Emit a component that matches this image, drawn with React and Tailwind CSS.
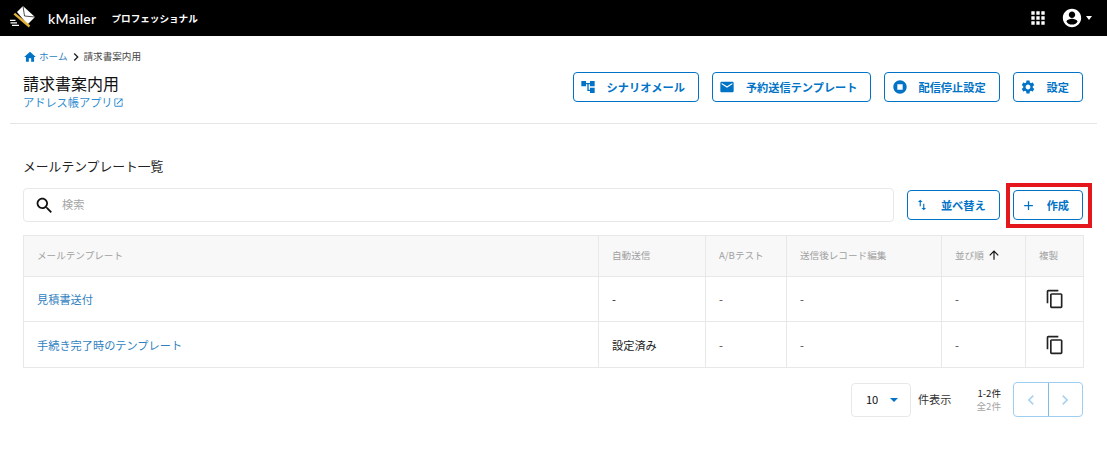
const F = "[font-family:'Noto_Sans_CJK_JP','Noto_Sans',sans-serif]";

const Ic = ({ d, size = 16, className = "" }) => (
  <svg width={size} height={size} viewBox="0 0 24 24" fill="currentColor" className={"shrink-0 " + className}>
    <path d={d} />
  </svg>
);

const P = {
  home: "M10 20v-6h4v6h5v-8h3L12 3 2 12h3v8z",
  chevron: "M8.59 16.59 13.17 12 8.59 7.41 10 6l6 6-6 6z",
  tree: "M22 11V3h-7v3H9V3H2v8h7V8h2v10h4v3h7v-8h-7v3h-2V8h2v3z",
  mail: "M20 4H4c-1.1 0-2 .9-2 2v12c0 1.1.9 2 2 2h16c1.1 0 2-.9 2-2V6c0-1.1-.9-2-2-2zm0 4-8 5-8-5V6l8 5 8-5v2z",
  stop: "M12 2C6.48 2 2 6.48 2 12s4.48 10 10 10 10-4.48 10-10S17.52 2 12 2zm4 14H8V8h8v8z",
  gear: "M19.14 12.94c.04-.3.06-.61.06-.94 0-.32-.02-.64-.07-.94l2.03-1.58c.18-.14.23-.41.12-.61l-1.92-3.32c-.12-.22-.37-.29-.59-.22l-2.39.96c-.5-.38-1.03-.7-1.62-.94l-.36-2.54c-.04-.24-.24-.41-.48-.41h-3.84c-.24 0-.43.17-.47.41l-.36 2.54c-.59.24-1.13.57-1.62.94l-2.39-.96c-.22-.08-.47 0-.59.22L2.74 8.87c-.12.21-.08.47.12.61l2.03 1.58c-.05.3-.09.63-.09.94s.02.64.07.94l-2.03 1.58c-.18.14-.23.41-.12.61l1.92 3.32c.12.22.37.29.59.22l2.39-.96c.5.38 1.03.7 1.62.94l.36 2.54c.05.24.24.41.48.41h3.84c.24 0 .44-.17.47-.41l.36-2.54c.59-.24 1.13-.56 1.62-.94l2.39.96c.22.08.47 0 .59-.22l1.92-3.32c.12-.22.07-.47-.12-.61l-2.01-1.58zM12 15.6c-1.98 0-3.6-1.62-3.6-3.6s1.62-3.6 3.6-3.6 3.6 1.62 3.6 3.6-1.62 3.6-3.6 3.6z",
  search: "M15.5 14h-.79l-.28-.27C15.41 12.59 16 11.11 16 9.5 16 5.91 13.09 3 9.5 3S3 5.91 3 9.5 5.91 16 9.5 16c1.61 0 3.09-.59 4.23-1.57l.27.28v.79l5 4.99L20.49 19l-4.99-5zm-6 0C7.01 14 5 11.99 5 9.5S7.01 5 9.5 5 14 7.01 14 9.5 11.99 14 9.5 14z",
  sort: "M16 17.01V10h-2v7.01h-3L15 21l4-3.99h-3zM9 3 5 6.99h3V14h2V6.99h3L9 3z",
  plus: "M19 13h-6v6h-2v-6H5v-2h6V5h2v6h6v2z",
  up: "M4 12l1.41 1.41L11 7.83V20h2V7.83l5.58 5.59L20 12l-8-8-8 8z",
  copy: "M16 1H4c-1.1 0-2 .9-2 2v14h2V3h12V1zm3 4H8c-1.1 0-2 .9-2 2v14c0 1.1.9 2 2 2h11c1.1 0 2-.9 2-2V7c0-1.1-.9-2-2-2zm0 16H8V7h11v14z",
  grid: "M4 8h4V4H4v4zm6 12h4v-4h-4v4zm-6 0h4v-4H4v4zm0-6h4v-4H4v4zm6 0h4v-4h-4v4zm6-10v4h4V4h-4zm-6 4h4V4h-4v4zm6 6h4v-4h-4v4zm0 6h4v-4h-4v4z",
  account: "M12 2C6.48 2 2 6.48 2 12s4.48 10 10 10 10-4.48 10-10S17.52 2 12 2zm0 3c1.93 0 3.5 1.57 3.5 3.5S13.93 12 12 12s-3.5-1.57-3.5-3.5S10.07 5 12 5zm0 14.2c-2.5 0-4.71-1.28-6-3.22.03-1.99 4-3.08 6-3.08s5.97 1.09 6 3.08c-1.29 1.94-3.5 3.22-6 3.22z",
  open: "M19 19H5V5h7V3H5c-1.11 0-2 .9-2 2v14c0 1.1.89 2 2 2h14c1.1 0 2-.9 2-2v-7h-2v7zM14 3v2h3.59l-9.83 9.83 1.41 1.41L19 6.41V10h2V3h-7z",
  left: "M15.41 7.41 14 6l-6 6 6 6 1.41-1.41L10.83 12z",
  right: "M10 6 8.59 7.41 13.17 12l-4.58 4.59L10 18l6-6z",
};

const Btn = ({ icon, children, iconSize = 16 }) => (
  <button className="h-[30px] flex items-center rounded-[4px] border border-[#0073c6] bg-white text-[#0073c6] text-[11.2px] font-bold pr-[13px]">
    <span className="w-[33px] pl-[6px] flex items-center justify-center pr-[10px] shrink-0">
      <Ic d={icon} size={iconSize} />
    </span>
    <span>{children}</span>
  </button>
);

const rows = [
  ["見積書送付", "-"],
  ["手続き完了時のテンプレート", "設定済み"],
];

export default function App() {
  return (
    <div className={`${F} w-[1107px] h-[473px] bg-white text-[#222] overflow-hidden`}>
      <header className="h-9 bg-black flex items-center pl-[9px] pr-[15px] text-white">
        <svg width="27" height="24" viewBox="0 0 27 24" className="shrink-0">
          <path d="M14 0 26 11 18.5 18.5 8 6z" fill="#fff" />
          <path d="M5.3 7.7 L20.5 20.5" stroke="#e2b23a" strokeWidth="2.4" />
          <path d="M14 0 L15.5 10 L26 11" stroke="#000" strokeWidth="0.7" fill="none" />
          <path d="M1 14.3h5.5M1.5 16.8h6.5M3 19.3h7" stroke="#fff" strokeWidth="1.2" />
        </svg>
        <span className="ml-[12px] text-[14px] font-medium tracking-[0.3px] [font-family:'Lato',sans-serif]">kMailer</span>
        <span className="ml-[15px] text-[9.6px] font-bold">プロフェッショナル</span>
        <div className="ml-auto flex items-center">
          <Ic d={P.grid} size={20} />
          <Ic d={P.account} size={22} className="ml-[13px]" />
          <span className="ml-[3px] w-0 h-0 border-x-[3.5px] border-x-transparent border-t-[4px] border-t-white" />
        </div>
      </header>

      <div className="ml-[10px] mr-[10px] pl-[13px] pr-[14px] border-b border-[#e5e5e5] h-[88px]">
        <nav className="pt-[13px] flex items-center text-[9.6px] leading-[15px] h-[28px]">
          <Ic d={P.home} size={14} className="text-[#0073c6]" />
          <span className="ml-[2px] text-[#2f7fc1]">ホーム</span>
          <Ic d={P.chevron} size={16} className="text-[#222]" />
          <span className="text-[#444]">請求書案内用</span>
        </nav>
        <div className="flex justify-between mt-[7px]">
          <div>
            <h1 className="text-[16px] leading-[24px] font-normal text-[#111]">請求書案内用</h1>
            <a className="flex items-center text-[11.2px] leading-[14px] text-[#2f8bd0]">
              アドレス帳アプリ<Ic d={P.open} size={11} />
            </a>
          </div>
          <div className="flex gap-[13px] mt-[1px]">
            <Btn icon={P.tree}>シナリオメール</Btn>
            <Btn icon={P.mail}>予約送信テンプレート</Btn>
            <Btn icon={P.stop}>配信停止設定</Btn>
            <Btn icon={P.gear}>設定</Btn>
          </div>
        </div>
      </div>

      <main className="pl-[23px] pr-[24px]">
        <h2 className="mt-[33px] text-[12.8px] leading-[18px] font-normal text-[#222]">メールテンプレート一覧</h2>

        <div className="mt-[13px] flex items-center">
          <div className="w-[871px] h-[34px] flex items-center border border-[#e8e8e8] rounded-[4px] pl-[10px]">
            <Ic d={P.search} size={21} className="text-[#111]" />
            <span className="ml-[7px] pb-[1px] text-[11.2px] text-[#a5a5a5]">検索</span>
          </div>
          <div className="ml-[13px]">
            <Btn icon={P.sort} iconSize={14}>並べ替え</Btn>
          </div>
          <div className="relative ml-[13px]">
            <Btn icon={P.plus} iconSize={15}>作成</Btn>
            <div className="absolute -left-[7px] -right-[9px] -top-[7px] -bottom-[8px] border-[4px] border-[#e3171c] pointer-events-none" />
          </div>
        </div>

        <table className="mt-[13px] w-[1060px] table-fixed border-collapse text-[9.6px]">
          <colgroup>
            <col className="w-[575px]" />
            <col className="w-[107px]" />
            <col className="w-[81px]" />
            <col className="w-[155px]" />
            <col className="w-[84px]" />
            <col className="w-[58px]" />
          </colgroup>
          <thead>
            <tr className="h-[41px] bg-[#f8f8f8] text-[#a0a0a0]">
              <th className="border border-[#e8e8e8] pl-[13px] pb-[1px] text-left font-normal">メールテンプレート</th>
              <th className="border border-[#e8e8e8] pl-[13px] pb-[1px] text-left font-normal">自動送信</th>
              <th className="border border-[#e8e8e8] pl-[13px] pb-[1px] text-left font-normal">A/Bテスト</th>
              <th className="border border-[#e8e8e8] pl-[13px] pb-[1px] text-left font-normal">送信後レコード編集</th>
              <th className="border border-[#e8e8e8] pl-[13px] pb-[1px] text-left font-normal">
                <span className="flex items-center gap-[3px]">並び順<Ic d={P.up} size={14} className="text-[#111]" /></span>
              </th>
              <th className="border border-[#e8e8e8] pl-[13px] pb-[1px] text-left font-normal">複製</th>
            </tr>
          </thead>
          <tbody>
            {rows.map(([name, auto], i) => (
              <tr key={i} className={i === 0 ? "h-[45px]" : "h-[46px] [&>td:not(:last-child)]:pt-[2px]"}>
                <td className="border border-[#e8e8e8] pl-[13px] text-[11.2px] text-[#2f7fc1]">{name}</td>
                <td className="border border-[#e8e8e8] pl-[13px] text-[11.2px] text-[#222]">{auto}</td>
                <td className="border border-[#e8e8e8] pl-[13px] text-[11.2px] text-[#444]">-</td>
                <td className="border border-[#e8e8e8] pl-[13px] text-[11.2px] text-[#444]">-</td>
                <td className="border border-[#e8e8e8] pl-[13px] text-[11.2px] text-[#444]">-</td>
                <td className="border border-[#e8e8e8] text-[#222]">
                  <div className="flex justify-center"><Ic d={P.copy} size={20} /></div>
                </td>
              </tr>
            ))}
          </tbody>
        </table>

        <div className="mt-[14px] flex items-center justify-end">
          <div className="w-[60px] h-[34px] flex items-center border border-[#e8e8e8] rounded-[4px] pl-[14px] text-[11.2px] text-[#111]">
            10
            <span className="ml-[12px] w-0 h-0 border-x-[4px] border-x-transparent border-t-[4px] border-t-[#0073c6]" />
          </div>
          <span className="ml-[7px] text-[11.2px] text-[#333]">件表示</span>
          <div className="ml-[25px] text-right text-[9.6px] leading-[13px]">
            <div className="text-[#222]">1-2件</div>
            <div className="text-[#a5a5a5]">全2件</div>
          </div>
          <div className="ml-[12px] w-[70px] h-[35px] flex border border-[#9fcdef] rounded-[4px] text-[#a9d3f2]">
            <div className="flex-1 flex items-center justify-center border-r border-[#7fbde9]"><Ic d={P.left} size={20} /></div>
            <div className="flex-1 flex items-center justify-center"><Ic d={P.right} size={20} /></div>
          </div>
        </div>
      </main>
    </div>
  );
}
